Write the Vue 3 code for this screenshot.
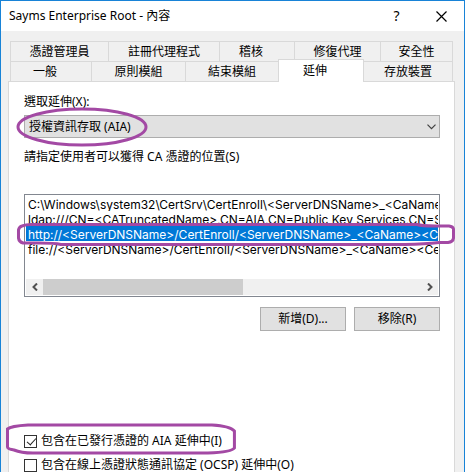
<script setup>
import { ref } from 'vue'

const tabRows = [
  [
    { label: '憑證管理員', share: 98 },
    { label: '註冊代理程式', share: 111 },
    { label: '稽核', share: 75 },
    { label: '修復代理', share: 86 },
    { label: '安全性', share: 72 },
  ],
  [
    { label: '一般', share: 81 },
    { label: '原則模組', share: 94 },
    { label: '結束模組', share: 93 },
    { label: '延伸', share: 85 },
    { label: '存放裝置', share: 89 },
  ],
]
const columns = (row) => row.map((tab) => `${tab.share}fr`).join(' ')

const activeTab = ref('延伸')
const extension = ref('aia')
const locations = [
  'C:\\Windows\\system32\\CertSrv\\CertEnroll\\<ServerDNSName>_<CaName><CertificateName>.crt',
  'ldap:///CN=<CATruncatedName>,CN=AIA,CN=Public Key Services,CN=Services',
  'http://<ServerDNSName>/CertEnroll/<ServerDNSName>_<CaName><CertificateName>.crt',
  'file://<ServerDNSName>/CertEnroll/<ServerDNSName>_<CaName><CertificateName>.crt',
]
const selected = ref(2)
const includeAia = ref(true)
const includeOcsp = ref(false)
</script>

<template>
  <main class="window">
    <header class="titlebar">
      <h1>Sayms Enterprise Root - 內容</h1>
      <button class="caption help" type="button" aria-label="說明">?</button>
      <button class="caption" type="button" aria-label="關閉">
        <svg width="11" height="11" viewBox="0 0 11 11"><path d="M.5.5l10 10M10.5.5l-10 10" /></svg>
      </button>
    </header>

    <div class="body">
      <nav class="tabs">
        <div
          v-for="(row, i) in tabRows"
          :key="i"
          class="tab-row"
          :style="{ gridTemplateColumns: columns(row) }"
        >
          <button
            v-for="tab in row"
            :key="tab.label"
            type="button"
            class="tab"
            :class="{ active: tab.label === activeTab, short: tab.label.length === 2 }"
            @click="activeTab = tab.label"
          >{{ tab.label }}</button>
        </div>
      </nav>

      <section class="panel">
        <label class="text" for="extension">選取延伸(X):</label>
        <div class="combo">
          <select id="extension" v-model="extension">
            <option value="aia">授權資訊存取 (AIA)</option>
          </select>
          <svg class="chevron" width="9" height="6" viewBox="0 0 9 6"><path d="M.5.7l4 4 4-4" /></svg>
          <svg class="mark oval" viewBox="0 0 132 40" preserveAspectRatio="none">
            <ellipse cx="66" cy="20" rx="64" ry="18" />
          </svg>
        </div>

        <label class="text places-label" for="places">請指定使用者可以獲得 CA 憑證的位置(S)</label>
        <div class="list">
          <select id="places" v-model="selected" size="4">
            <option v-for="(place, i) in locations" :key="i" :value="i">{{ place }}</option>
          </select>
          <div class="scroll">
            <button type="button" aria-label="向左捲動">
              <svg width="6" height="8" viewBox="0 0 6 8"><path d="M5 .5L1.5 4 5 7.5" /></svg>
            </button>
            <div class="track"><div class="thumb"></div></div>
            <button type="button" aria-label="向右捲動">
              <svg width="6" height="8" viewBox="0 0 6 8"><path d="M1 .5L4.5 4 1 7.5" /></svg>
            </button>
          </div>
          <svg class="mark row-mark" viewBox="0 0 440 24" preserveAspectRatio="none">
            <path d="M5 3Q9 1.5 14 1.5H402Q406 3 420 3H434Q438 3.5 438.5 6V15Q438 19 433 19.5H424Q410 21 390 21.5H44Q38 20 22 20H6Q2 19 1.5 15V7Q2 4 5 3Z" />
          </svg>
        </div>

        <div class="actions">
          <button type="button">新增(D)...</button>
          <button type="button">移除(R)</button>
        </div>

        <div class="checks">
          <label>
            <input v-model="includeAia" type="checkbox" />
            <span>包含在已發行憑證的 AIA 延伸中(I)</span>
            <svg class="mark check-mark" viewBox="0 0 230 32" preserveAspectRatio="none">
              <path d="M1.5 6Q5 3 22 2H206Q224 3 228.5 8V25Q226 29 202 30H27Q15 30 8 27Q1.5 26 1.5 24Z" />
            </svg>
          </label>
          <label>
            <input v-model="includeOcsp" type="checkbox" />
            <span>包含在線上憑證狀態通訊協定 (OCSP) 延伸中(O)</span>
          </label>
        </div>
      </section>
    </div>
  </main>
</template>

<style>
body {
  overflow: hidden;
}
</style>

<style scoped>
.window,
.window * {
  box-sizing: border-box;
}
.window {
  display: flex;
  flex-direction: column;
  height: 100vh;
  overflow: hidden;
  border: 1px solid #1883d7;
  border-bottom: 0;
  background: #f0f0f0;
  color: #000;
  font: 12px/16px "Noto Sans", "Noto Sans CJK TC", sans-serif;
}
button,
select {
  margin: 0;
  padding: 0;
  border: 0;
  border-radius: 0;
  background: none;
  color: inherit;
  font: inherit;
}
svg {
  display: block;
  fill: none;
}
.titlebar {
  display: flex;
  flex: none;
  align-items: center;
  height: 30px;
  padding: 0 0 0 8px;
  background: #fff;
}
h1 {
  flex: 1;
  margin: 0;
  font-size: 12px;
  font-weight: 400;
}
.caption {
  display: flex;
  align-items: center;
  justify-content: center;
  width: 45px;
  height: 28px;
}
.caption svg {
  stroke: #000;
  stroke-width: 1.2;
}
.help {
  font-size: 14px;
}
.body {
  display: flex;
  flex: 1;
  flex-direction: column;
  padding: 10px 9px 0 7px;
}
.tabs {
  padding: 0 2px;
}
.tab-row {
  display: grid;
  height: 20px;
  border-left: 1px solid #d9d9d9;
}
.tab {
  border: solid #d9d9d9;
  border-width: 1px 1px 0 0;
  line-height: 18px;
  white-space: nowrap;
}
.tab.short {
  padding-right: 12px;
}
.tab.active {
  position: relative;
  z-index: 1;
  height: 23px;
  margin: -2px 0 0 -1px;
  border-left-width: 1px;
  background: #fff;
}
.panel {
  flex: 1;
  padding: 12px 14px 0 15px;
  border: 1px solid #d9d9d9;
  border-bottom: 0;
  background: #fff;
}
.text {
  display: block;
  line-height: 16px;
}
.combo {
  position: relative;
  margin-top: 5px;
}
.combo select {
  display: block;
  width: 100%;
  height: 23px;
  padding: 0 4px;
  border: 1px solid #adadad;
  background: #e1e1e1;
  appearance: none;
}
.chevron {
  position: absolute;
  top: 9px;
  right: 4px;
  stroke: #404040;
  stroke-width: 1.2;
  pointer-events: none;
}
.mark {
  position: absolute;
  z-index: 2;
  overflow: visible;
  stroke: #a349a4;
  stroke-width: 3;
  pointer-events: none;
}
.mark * {
  vector-effect: non-scaling-stroke;
}
.oval {
  top: -8px;
  left: -8px;
  width: 132px;
  height: 40px;
}
.places-label {
  margin-top: 11px;
}
.list {
  position: relative;
  margin-top: 29px;
  padding: 1px;
  border: 1px solid #828790;
}
.list select {
  display: block;
  width: 100%;
  height: 83px;
  overflow: hidden;
  outline: 0;
  font-family: Inter, "Noto Sans", "Noto Sans CJK TC", sans-serif;
  appearance: none;
}
.list option {
  height: 15px;
  min-height: 15px;
  padding: 1px 2px 0;
  overflow: hidden;
  line-height: 15px;
  white-space: pre;
}
.list option:checked {
  background: #0078d7 linear-gradient(#0078d7, #0078d7);
  color: #fff;
  -webkit-text-fill-color: #fff;
}
.scroll {
  display: flex;
  height: 16px;
  background: #f0f0f0;
}
.scroll button {
  display: flex;
  align-items: center;
  justify-content: center;
  width: 17px;
}
.scroll svg {
  stroke: #505050;
  stroke-width: 2;
}
.track {
  flex: 1;
}
.thumb {
  width: 53%;
  height: 100%;
  background: #cdcdcd;
}
.row-mark {
  top: 28px;
  left: -8px;
  width: calc(100% + 24px);
  height: 24px;
}
.actions {
  display: flex;
  justify-content: flex-end;
  gap: 8px;
  margin-top: 10px;
}
.actions button {
  width: 86px;
  height: 24px;
  border: 1px solid #adadad;
  background: #e1e1e1;
}
.checks {
  display: grid;
  justify-items: start;
  gap: 8px;
  margin-top: 102px;
}
.checks label {
  position: relative;
  display: flex;
  align-items: center;
  gap: 4px;
  line-height: 16px;
  white-space: nowrap;
}
.checks input {
  width: 13px;
  height: 13px;
  margin: 0;
  border: 1px solid #333;
  background: #fff;
  appearance: none;
}
.checks input:checked::before {
  content: "";
  display: block;
  width: 4px;
  height: 8px;
  margin: 0 0 0 4px;
  border: solid #222;
  border-width: 0 1px 1px 0;
  transform: rotate(42deg);
}
.check-mark {
  top: -10px;
  left: -18px;
  width: calc(100% + 32px);
  height: 32px;
}
</style>
